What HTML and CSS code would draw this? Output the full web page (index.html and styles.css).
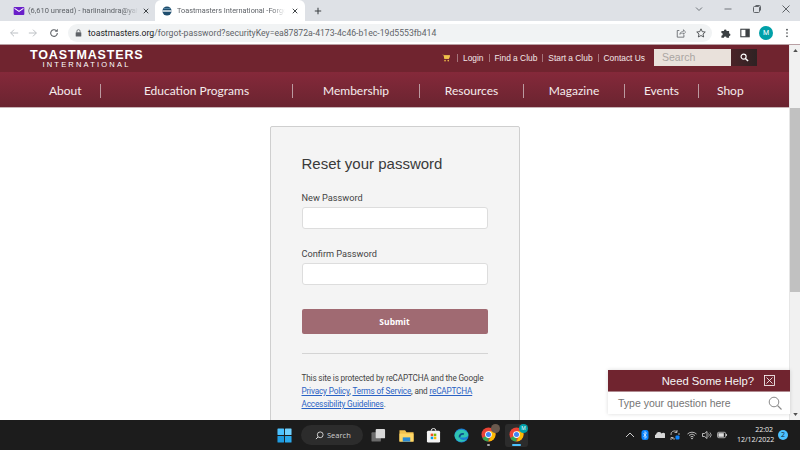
FILE: index.html
```html
<!DOCTYPE html>
<html lang="en">
<head>
    <meta charset="UTF-8">
    <title>Toastmasters International - Forgot Password</title>
    <link rel="stylesheet" href="styles.css">
</head>
<body>
    <div class="tabstrip">
        <div class="tab">
            <svg class="favicon favicon-mail" viewBox="0 0 12 9"><rect width="12" height="9" rx="1" fill="#6a1fc9"/><path d="M1 1.500l5 3.500 5-3.500" fill="none" stroke="#fff" stroke-width="1.2"/></svg>
            <span class="tab-title">(6,610 unread) - harlinaindra@yahoo.com</span>
            <svg class="tab-close" viewBox="0 0 8 8"><path d="M1 1l6 6M7 1L1 7" stroke="#3c4043" stroke-width="1.3"/></svg>
        </div>
        <div class="tab active">
            <svg class="favicon" viewBox="0 0 12 12"><circle cx="6" cy="6" r="5.500" fill="#1f4e6e"/><path d="M0.500 6h11" stroke="#fff" stroke-width="1.600"/><path d="M2 3h8" stroke="#5d8fae"/></svg>
            <span class="tab-title">Toastmasters International -Forgot Password</span>
            <svg class="tab-close" viewBox="0 0 8 8"><path d="M1 1l6 6M7 1L1 7" stroke="#3c4043" stroke-width="1.3"/></svg>
        </div>
        <svg class="new-tab" viewBox="0 0 10 10"><path d="M5 1v8M1 5h8" stroke="#3c4043" stroke-width="1.3"/></svg>
        <div class="win-controls">
            <svg viewBox="0 0 10 10"><path d="M2 3.500l3 3 3-3" fill="none" stroke="#70757a"/></svg>
            <svg viewBox="0 0 10 10"><path d="M1.500 5h7" stroke="#70757a"/></svg>
            <svg viewBox="0 0 10 10"><rect x="1.500" y="2.500" width="6" height="6" rx="1" fill="none" stroke="#5f6368"/><path d="M3.500 1.500h4a1 1 0 0 1 1 1v4" fill="none" stroke="#5f6368"/></svg>
            <svg viewBox="0 0 10 10"><path d="M1.500 1.500l7 7M8.500 1.500l-7 7" stroke="#5f6368"/></svg>
        </div>
    </div>

    <div class="toolbar">
        <svg class="tool-icon" viewBox="0 0 12 12"><path d="M11 6H2M6 2L2 6l4 4" fill="none" stroke="#bcc0c4" stroke-width="1.2"/></svg>
        <svg class="tool-icon" viewBox="0 0 12 12"><path d="M1 6h9M6 2l4 4-4 4" fill="none" stroke="#bcc0c4" stroke-width="1.2"/></svg>
        <svg class="tool-icon reload" viewBox="0 0 12 12"><path d="M10 6a4 4 0 1 1-1.200-2.800" fill="none" stroke="#5f6368" stroke-width="1.300"/><path d="M10.500 1v3.500H7z" fill="#5f6368"/></svg>
        <div class="omnibox">
            <svg class="lock" viewBox="0 0 8 10"><rect x="0.500" y="4" width="7" height="5.500" rx="0.800" fill="#5f6368"/><path d="M2 4V2.800a2 2 0 0 1 4 0V4" fill="none" stroke="#5f6368"/></svg>
            <span class="url"><span class="url-host">toastmasters.org</span>/forgot-password?securityKey=ea87872a-4173-4c46-b1ec-19d5553fb414</span>
            <svg class="omni-icon" viewBox="0 0 12 12"><path d="M4 3H1.500v8h8V8" fill="none" stroke="#5f6368"/><path d="M4.500 7.500C5 5 7 4 9 4V2l2.500 3L9 7.500V6C7 6 5.500 6.500 4.500 7.500z" fill="none" stroke="#5f6368" stroke-width="0.800"/></svg>
            <svg class="omni-icon" viewBox="0 0 12 12"><path d="M6 1l1.500 3.400 3.600.4-2.700 2.400.8 3.600L6 9l-3.200 1.800.8-3.600L.9 4.800l3.600-.4z" fill="none" stroke="#3c4043"/></svg>
        </div>
        <svg class="tool-icon" viewBox="0 0 12 12"><path d="M0.500 3.500h3a1.600 1.600 0 1 1 3.200 0h3v3a1.600 1.600 0 1 1 0 3.200v2h-3a1.600 1.600 0 0 0-3.200 0h-3v-2.500a1.600 1.600 0 0 0 0-3.200z" fill="#3c4043"/></svg>
        <svg class="tool-icon" viewBox="0 0 12 12"><rect x="1" y="1.500" width="10" height="9" fill="none" stroke="#3c4043" stroke-width="1.300"/><rect x="6.500" y="1.500" width="4.500" height="9" fill="#3c4043"/></svg>
        <div class="avatar">M</div>
        <svg class="tool-icon" viewBox="0 0 12 12"><circle cx="6" cy="2" r="1" fill="#3c4043"/><circle cx="6" cy="6" r="1" fill="#3c4043"/><circle cx="6" cy="10" r="1" fill="#3c4043"/></svg>
    </div>

    <div class="viewport">
        <div class="page">
            <header class="site-top">
                <div class="logo">
                    <div class="logo-main">TOASTMASTERS</div>
                    <div class="logo-sub">INTERNATIONAL</div>
                </div>
                <div class="top-links">
                    <svg class="cart" viewBox="0 0 10 9"><path d="M0 0.500h2l1 5h5.500L10 1.500H2.500" fill="#f0c14b"/><path d="M2 1h8L8.700 5.500H3z" fill="#f0c14b"/><circle cx="3.800" cy="7.800" r="1" fill="#f0c14b"/><circle cx="7.800" cy="7.800" r="1" fill="#f0c14b"/></svg>
                    <a class="top-link">Login</a>
                    <a class="top-link">Find a Club</a>
                    <a class="top-link">Start a Club</a>
                    <a class="top-link">Contact Us</a>
                </div>
                <div class="site-search">
                    <div class="search-field">Search</div>
                    <div class="search-btn">
                        <svg viewBox="0 0 10 10"><circle cx="4" cy="4" r="2.800" fill="none" stroke="#fff" stroke-width="1.300"/><path d="M6 6l3 3" stroke="#fff" stroke-width="1.600"/></svg>
                    </div>
                </div>
            </header>
            <nav class="site-nav">
                <a class="nav-item nav-about">About</a>
                <a class="nav-item nav-education">Education Programs</a>
                <a class="nav-item nav-membership">Membership</a>
                <a class="nav-item nav-resources">Resources</a>
                <a class="nav-item nav-magazine">Magazine</a>
                <a class="nav-item nav-events">Events</a>
                <a class="nav-item nav-shop">Shop</a>
            </nav>
            <main class="content">
                <div class="card">
                    <h1>Reset your password</h1>
                    <form>
                        <div class="form-group">
                            <label for="new_password">New Password</label>
                            <input type="password" id="new_password">
                        </div>
                        <div class="form-group">
                            <label for="confirm_password">Confirm Password</label>
                            <input type="password" id="confirm_password">
                        </div>
                        <button type="button">Submit</button>
                    </form>
                    <hr>
                    <p class="recaptcha">This site is protected by reCAPTCHA and the Google <a>Privacy Policy</a>, <a>Terms of Service</a>, and <a>reCAPTCHA Accessibility Guidelines</a>.</p>
                </div>
            </main>
        </div>
        <div class="scrollbar">
            <svg class="scroll-arrow" viewBox="0 0 6 4"><path d="M3 0l3 4H0z" fill="#505050"/></svg>
            <div class="scroll-gap"></div>
            <div class="scroll-thumb"></div>
            <div class="scroll-rest"></div>
            <svg class="scroll-arrow" viewBox="0 0 6 4"><path d="M0 0h6L3 4z" fill="#505050"/></svg>
        </div>
        <div class="help-box">
            <div class="help-head">
                <span>Need Some Help?</span>
                <svg class="help-close" viewBox="0 0 11 11"><rect x="0.500" y="0.500" width="10" height="10" fill="none" stroke="#fff" stroke-width="0.800"/><path d="M2.500 2.500l6 6M8.500 2.500l-6 6" stroke="#fff" stroke-width="0.800"/></svg>
            </div>
            <div class="help-body">
                <span>Type your question here</span>
                <svg class="help-search" viewBox="0 0 14 14"><circle cx="6" cy="6" r="4.800" fill="none" stroke="#8a8a8a"/><path d="M9.500 9.500l4 4" stroke="#8a8a8a" stroke-width="1.100"/></svg>
            </div>
        </div>
    </div>

    <footer class="taskbar">
        <div class="task-center">
            <svg class="task-icon" viewBox="0 0 16 16"><rect x="0.500" y="0.500" width="7" height="7" rx="0.600" fill="#4cc2ff"/><rect x="8.500" y="0.500" width="7" height="7" rx="0.600" fill="#6fd0ff"/><rect x="0.500" y="8.500" width="7" height="7" rx="0.600" fill="#1f9be0"/><rect x="8.500" y="8.500" width="7" height="7" rx="0.600" fill="#2aa9ec"/></svg>
            <div class="task-search">
                <svg viewBox="0 0 10 10"><circle cx="5.800" cy="4.200" r="3.200" fill="none" stroke="#ddd"/><path d="M3.400 6.600L1 9" stroke="#ddd" stroke-width="1.100"/></svg>
                <span>Search</span>
            </div>
            <svg class="task-icon" viewBox="0 0 16 16"><rect x="0.500" y="4.500" width="10" height="10" rx="1" fill="#6b6b6b"/><rect x="5" y="1" width="10" height="10" rx="1" fill="#d8d8d8"/></svg>
            <svg class="task-icon" viewBox="0 0 16 16"><path d="M0.500 2.500h6l1.500 2h7.500v10H0.500z" fill="#f2c14e"/><rect x="0.500" y="6" width="15" height="8.500" fill="#ffd766"/><rect x="4" y="10" width="8" height="4.500" fill="#2a8ad4"/></svg>
            <svg class="task-icon" viewBox="0 0 16 16"><rect x="1" y="3" width="14" height="12.500" rx="1.500" fill="#f4f4f4"/><path d="M5.500 3a2.500 2.500 0 0 1 5 0" fill="none" stroke="#f4f4f4"/><rect x="5" y="6" width="2.700" height="2.700" fill="#f25022"/><rect x="8.300" y="6" width="2.700" height="2.700" fill="#7fba00"/><rect x="5" y="9.300" width="2.700" height="2.700" fill="#00a4ef"/><rect x="8.300" y="9.300" width="2.700" height="2.700" fill="#ffb900"/></svg>
            <svg class="task-icon" viewBox="0 0 16 16"><circle cx="8" cy="8" r="7.500" fill="#1b7fd6"/><path d="M1 6c2-5 11-6 14 0 1 3-2 4.500-5 4H6c0 2.500 4 3.500 7.500 2-2 3-9 4.500-12-1-1-2-1-3-.5-5z" fill="#2fc4b2"/><path d="M6 10c-.5-2.500 2-4.500 4.500-3.500" fill="none" stroke="#0c4f8c" stroke-width="2"/></svg>
            <div class="chrome-wrap">
                <svg class="task-icon" viewBox="0 0 16 16"><circle cx="8" cy="8" r="7.500" fill="#ea4335"/><path d="M8 8L1.500 11.700A7.500 7.500 0 0 0 8 15.500z" fill="#34a853"/><path d="M8 8h3.700L8 15.500A7.500 7.500 0 0 0 15.500 8a7 7 0 0 0-1-3.500H8z" fill="#fbbc05"/><circle cx="8" cy="8" r="3.600" fill="#fff"/><circle cx="8" cy="8" r="2.700" fill="#4285f4"/></svg>
                <span class="chrome-badge photo"></span>
                <span class="task-dot"></span>
            </div>
            <div class="chrome-wrap current">
                <svg class="task-icon" viewBox="0 0 16 16"><circle cx="8" cy="8" r="7.500" fill="#ea4335"/><path d="M8 8L1.500 11.700A7.500 7.500 0 0 0 8 15.500z" fill="#34a853"/><path d="M8 8h3.700L8 15.500A7.500 7.500 0 0 0 15.500 8a7 7 0 0 0-1-3.500H8z" fill="#fbbc05"/><circle cx="8" cy="8" r="3.600" fill="#fff"/><circle cx="8" cy="8" r="2.700" fill="#4285f4"/></svg>
                <span class="chrome-badge teal">M</span>
                <span class="task-line"></span>
            </div>
        </div>
        <div class="tray">
            <svg class="tray-icon" viewBox="0 0 10 10"><path d="M1 7l4-4 4 4" fill="none" stroke="#ccc"/></svg>
            <svg class="tray-icon" viewBox="0 0 10 10"><rect x="1.500" y="0" width="7" height="10" rx="2.500" fill="#0a84ff"/><path d="M3.500 3l3 4L5 8.500v-7L6.500 3l-3 4" fill="none" stroke="#fff" stroke-width="0.600"/></svg>
            <svg class="tray-icon" viewBox="0 0 10 10"><path d="M0 8a2 2 0 0 1 1-3.500A3 3 0 0 1 6.500 3.500 2.300 2.300 0 0 1 9.800 8z" fill="#d8d8d8"/></svg>
            <svg class="tray-icon" viewBox="0 0 10 10"><path d="M1 5a3.500 3.500 0 0 1 6-3M7 0v2.500H4.500M5 9a3.500 3.500 0 0 1-3.500-1.500M1 10V7.500h2.500" fill="none" stroke="#ccc" stroke-width="0.800"/><path d="M9 3v2" stroke="#ccc" stroke-width="0.800"/><rect x="5.500" y="5.500" width="4" height="4" rx="1" fill="#0a84ff"/></svg>
            <svg class="tray-icon tray-wifi" viewBox="0 0 10 10"><path d="M0.500 4a6.500 6.500 0 0 1 9 0M2 5.500a4.300 4.300 0 0 1 6 0M3.500 7a2.200 2.200 0 0 1 3 0" fill="none" stroke="#ddd" stroke-width="0.800"/><circle cx="5" cy="8.500" r="0.800" fill="#ddd"/></svg>
            <svg class="tray-icon" viewBox="0 0 10 10"><path d="M0.500 3.500h2L5 1.500v7L2.500 6.500h-2z" fill="none" stroke="#ddd" stroke-width="0.800"/><path d="M6.500 3.500a2 2 0 0 1 0 3M8 2.500a3.500 3.500 0 0 1 0 5" fill="none" stroke="#ddd" stroke-width="0.700"/></svg>
            <svg class="tray-icon" viewBox="0 0 11 10"><rect x="0.500" y="2" width="9" height="6" rx="1.500" fill="none" stroke="#ddd" stroke-width="0.800"/><rect x="1.500" y="3" width="6" height="4" fill="#ddd"/><rect x="10" y="4" width="1" height="2" fill="#ddd"/></svg>
            <div class="clock"><div>22:02</div><div>12/12/2022</div></div>
            <div class="notify">2</div>
        </div>
    </footer>
</body>
</html>
```

FILE: styles.css
```css
body {
    margin: 0;
    width: 800px;
    height: 450px;
    overflow: hidden;
    display: flex;
    flex-direction: column;
    font-family: "Open Sans", sans-serif;
    background-color: white;
}

/* browser chrome */
.tabstrip {
    height: 21px;
    flex: none;
    display: flex;
    align-items: center;
    background-color: #dee1e6;
}
.tab {
    width: 155px;
    height: 21px;
    box-sizing: border-box;
    padding: 0 6px 0 13px;
    display: flex;
    align-items: center;
    gap: 3px;
    font-family: Roboto, sans-serif;
    font-size: 7.5px;
    color: #5f6368;
}
.tab.active {
    width: 150px;
    padding: 0 7px;
    gap: 5px;
    background-color: white;
    border-radius: 6px 6px 0 0;
    font-size: 7.3px;
}
.favicon {
    width: 10px;
    height: 10px;
    flex: none;
}
.favicon-mail {
    width: 12px;
    height: 8px;
}
.tab-title {
    flex: 1;
    overflow: hidden;
    white-space: nowrap;
    -webkit-mask-image: linear-gradient(to right, black 88%, transparent);
    mask-image: linear-gradient(to right, black 88%, transparent);
}
.tab-close {
    width: 6px;
    height: 6px;
    flex: none;
    margin-left: 2px;
}
.new-tab {
    width: 8px;
    height: 8px;
    margin-left: 9px;
}
.win-controls {
    margin-left: auto;
    display: flex;
    gap: 19px;
    padding: 0 9px 3px 0;
}
.win-controls svg {
    width: 10px;
    height: 10px;
}

.toolbar {
    height: 23px;
    flex: none;
    box-sizing: border-box;
    padding: 0 8px 0 9px;
    display: flex;
    align-items: center;
    gap: 9px;
    background-color: white;
}
.tool-icon {
    width: 10px;
    height: 10px;
    flex: none;
}
.reload {
    margin-left: 2px;
}
.omnibox {
    width: 644px;
    height: 18px;
    box-sizing: border-box;
    padding: 0 6px 0 7px;
    display: flex;
    align-items: center;
    gap: 6px;
    background-color: #f1f3f4;
    border-radius: 9px;
    flex: none;
}
.lock {
    width: 7px;
    height: 8px;
    flex: none;
}
.url {
    flex: 1;
    font-family: Roboto, sans-serif;
    font-size: 8.67px;
    color: #5f6368;
    white-space: nowrap;
}
.url-host {
    color: #202124;
}
.omni-icon {
    width: 10px;
    height: 10px;
    margin-left: 4px;
    flex: none;
}
.avatar {
    width: 14px;
    height: 14px;
    flex: none;
    border-radius: 50%;
    background-color: #00a0a8;
    color: white;
    font-family: Roboto, sans-serif;
    font-size: 7px;
    line-height: 14px;
    text-align: center;
}

/* page */
.viewport {
    position: relative;
    flex: 1;
    min-height: 0;
    display: flex;
    overflow: hidden;
    border-top: 1px solid #b9a0a4;
    box-sizing: border-box;
}
.page {
    flex: 1;
    min-width: 0;
    overflow: hidden;
}
.site-top {
    height: 27px;
    box-sizing: border-box;
    padding-bottom: 2px;
    display: flex;
    align-items: center;
    background-color: #70242f;
    color: white;
}
.logo {
    margin-left: 30px;
    width: 113px;
    padding-top: 3px;
}
.logo-main {
    font-family: "Liberation Sans", sans-serif;
    font-weight: bold;
    font-size: 12.5px;
    line-height: 11px;
    white-space: nowrap;
    letter-spacing: 0.85px;
}
.logo-sub {
    font-family: "Liberation Sans", sans-serif;
    font-size: 7.5px;
    line-height: 7px;
    letter-spacing: 2.2px;
    text-align: center;
}
.top-links {
    margin-left: 299px;
    display: flex;
    align-items: center;
    font-family: "Liberation Sans", sans-serif;
    font-size: 8.4px;
    color: #f3e8e8;
}
.cart {
    width: 8px;
    height: 8px;
    margin-right: 7px;
}
.top-link {
    padding: 0 5px;
    border-left: 1px solid #a5747b;
    line-height: 8px;
    white-space: nowrap;
}
.site-search {
    margin-left: 4px;
    display: flex;
    height: 17px;
}
.search-field {
    width: 77px;
    box-sizing: border-box;
    padding-left: 8px;
    background-color: #e9e1db;
    color: #a9a5a2;
    font-family: "Liberation Sans", sans-serif;
    font-size: 10.5px;
    line-height: 17px;
}
.search-btn {
    width: 26px;
    display: flex;
    align-items: center;
    justify-content: center;
    background: linear-gradient(to right, #4a2328, #2e2223);
}
.search-btn svg {
    width: 9px;
    height: 9px;
}
.site-nav {
    height: 32px;
    padding-top: 3px;
    display: flex;
    align-items: center;
    background: linear-gradient(to bottom, #85293a, #6a2430);
    border-bottom: 1px solid #c9b4b7;
    font-family: Lato, sans-serif;
    font-size: 12px;
    color: #f5ecec;
}
.nav-item {
    line-height: 14px;
    border-left: 1px solid #bb9aa0;
    white-space: nowrap;
    text-align: center;
    box-sizing: border-box;
}
.nav-about { width: 100px; border-left: none; padding-left: 49px; text-align: left; }
.nav-education { width: 192px; }
.nav-membership { width: 127px; }
.nav-resources { width: 104px; }
.nav-magazine { width: 101px; }
.nav-events { width: 74px; }
.nav-shop { width: 91px; padding-left: 18px; text-align: left; }

.content {
    display: flex;
    justify-content: center;
    padding-top: 18px;
}
.card {
    width: 250px;
    box-sizing: border-box;
    padding: 27px 31px 30px;
    background-color: #f4f4f4;
    border: 1px solid #cfcfcf;
    border-radius: 2px 2px 0 0;
}
h1 {
    margin: 0 0 17px;
    font-family: "Liberation Sans", sans-serif;
    font-weight: normal;
    font-size: 15px;
    line-height: 20px;
    color: #3a3a3a;
}
.form-group {
    margin-bottom: 18px;
}
label {
    display: block;
    margin-bottom: 3px;
    font-family: Roboto, sans-serif;
    font-size: 9.2px;
    line-height: 13px;
    color: #444;
}
input {
    display: block;
    width: 100%;
    height: 22px;
    box-sizing: border-box;
    border: 1px solid #ddd;
    border-radius: 3px;
    background-color: white;
}
button {
    display: block;
    width: 100%;
    height: 25px;
    margin-top: 24px;
    border: none;
    border-radius: 2px;
    background-color: #a06a72;
    color: white;
    font-family: "Open Sans", sans-serif;
    font-weight: bold;
    font-size: 8.5px;
}
hr {
    margin: 19px 0 18px;
    border: none;
    border-top: 1px solid #d4d4d4;
}
.recaptcha {
    margin: 0;
    font-family: Roboto, sans-serif;
    font-size: 8.2px;
    letter-spacing: -0.16px;
    line-height: 13px;
    color: #444;
}
.recaptcha a {
    color: #2a62c4;
    text-decoration: underline;
}

.scrollbar {
    width: 11px;
    flex: none;
    display: flex;
    flex-direction: column;
    align-items: center;
    background-color: #f1f1f1;
    border-left: 1px solid #e6e6e6;
    box-sizing: border-box;
}
.scroll-arrow {
    width: 5px;
    height: 3px;
    margin: 4px 0;
    flex: none;
}
.scroll-gap {
    height: 52px;
    flex: none;
}
.scroll-thumb {
    width: 100%;
    height: 184px;
    flex: none;
    background-color: #c1c1c1;
}
.scroll-rest {
    flex: 1;
}

.help-box {
    position: absolute;
    right: 10px;
    bottom: 6px;
    width: 182px;
    box-shadow: 0 0 4px rgba(0,0,0,0.15);
    background-color: white;
}
.help-head {
    height: 22px;
    box-sizing: border-box;
    padding-right: 15px;
    display: flex;
    align-items: center;
    justify-content: flex-end;
    gap: 10px;
    background-color: #70242f;
    color: #f5f5f5;
    font-family: "Liberation Sans", sans-serif;
    font-size: 11.3px;
    border-bottom: 1px solid #b08a90;
}
.help-close {
    width: 11px;
    height: 11px;
}
.help-body {
    height: 22px;
    box-sizing: border-box;
    padding: 0 8px 0 10px;
    display: flex;
    align-items: center;
    justify-content: space-between;
    font-family: "Liberation Sans", sans-serif;
    font-size: 10.5px;
    color: #757575;
}
.help-search {
    width: 14px;
    height: 14px;
}

/* windows taskbar */
.taskbar {
    height: 30px;
    flex: none;
    display: flex;
    align-items: center;
    background-color: #1c1c1c;
    color: #eee;
}
.task-center {
    margin-left: 277px;
    display: flex;
    align-items: center;
    gap: 12.6px;
}
.task-icon {
    width: 15px;
    height: 15px;
    display: block;
    flex: none;
}
.task-search {
    width: 62px;
    height: 20px;
    box-sizing: border-box;
    padding-left: 14px;
    margin: 0 -4.6px 0 -3.6px;
    display: flex;
    align-items: center;
    gap: 3px;
    background-color: #2c2c2c;
    border-radius: 10px;
    font-family: "Open Sans", sans-serif;
    font-size: 7.5px;
    color: #cfcfcf;
}
.task-search svg {
    width: 9px;
    height: 9px;
}
.chrome-wrap {
    position: relative;
    padding: 3px 4px 5px;
    margin: 0 -4px;
}
.chrome-wrap.current {
    background-color: #2c2c2c;
    border-radius: 3px;
}
.chrome-badge {
    position: absolute;
    top: 0;
    right: 0;
    width: 9px;
    height: 9px;
    border-radius: 50%;
    font-size: 5px;
    line-height: 9px;
    text-align: center;
    color: white;
}
.chrome-badge.photo {
    background-color: #6b5a4e;
}
.chrome-badge.teal {
    background-color: #00a0a8;
}
.task-dot {
    position: absolute;
    bottom: 1px;
    left: 10px;
    width: 3px;
    height: 2px;
    border-radius: 1px;
    background-color: #aaa;
}
.task-line {
    position: absolute;
    bottom: 1px;
    left: 7px;
    width: 9px;
    height: 2px;
    border-radius: 1px;
    background-color: #4cc2ff;
}
.tray {
    margin-left: auto;
    padding-right: 12px;
    display: flex;
    align-items: center;
    gap: 5px;
}
.tray-icon {
    width: 10px;
    height: 10px;
    flex: none;
}
.tray-wifi {
    margin-left: 2px;
}
.clock {
    margin-left: 5px;
    width: 36px;
    font-family: "Open Sans", sans-serif;
    font-size: 7px;
    line-height: 10px;
    text-align: right;
    white-space: nowrap;
    color: #eee;
}
.notify {
    width: 10px;
    height: 10px;
    border-radius: 50%;
    background-color: #4cc2ff;
    color: #123;
    font-size: 7px;
    line-height: 10px;
    text-align: center;
}
```
